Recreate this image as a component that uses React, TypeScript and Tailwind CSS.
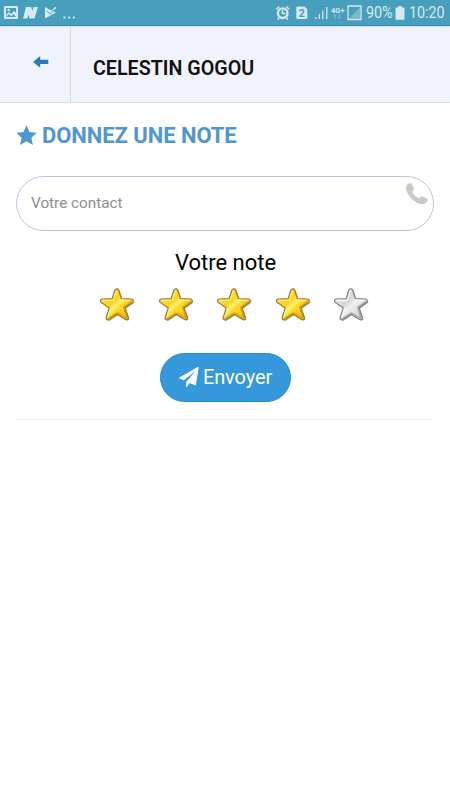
const starPath =
  "M16.4 1.8 C17.4 1.2 18.9 1.4 19.4 2.8 L22.1 11.2 L32.2 11.6 C34.2 11.9 34.5 13.8 33.2 14.9 L25.6 20.4 L29 30.3 C29.3 32 27.6 32.8 26.2 32 L17.9 26.8 L9.6 32.2 C8 33 6.4 32 6.8 30.3 L9.9 20.7 L2 15 C.6 13.8 1 11.9 2.9 11.6 L12.9 11.3 L15.4 3 Z";

function RatingStar({ on }: { on: boolean }) {
  return (
    <svg width="36" height="36" viewBox="-.3 -.4 36 36">
      <defs>
        <linearGradient id="gold" x1="0" y1="0" x2="1" y2="1">
          <stop offset="0.1" stopColor="#ffe45b" />
          <stop offset="0.4" stopColor="#ffd414" />
          <stop offset="0.5" stopColor="#fff07a" />
          <stop offset="0.6" stopColor="#ffd51c" />
          <stop offset="1" stopColor="#f8bc08" />
        </linearGradient>
        <linearGradient id="silver" x1="0" y1="0" x2="1" y2="1">
          <stop offset="0.1" stopColor="#eeeeee" />
          <stop offset="0.4" stopColor="#d6d6d6" />
          <stop offset="0.52" stopColor="#efefef" />
          <stop offset="1" stopColor="#c8c8c8" />
        </linearGradient>
      </defs>
      <path d={starPath} transform="translate(1.1 .9)" fill="#666" opacity="0.6" />
      <path
        d={starPath}
        fill={on ? "url(#gold)" : "url(#silver)"}
        stroke={on ? "#987a34" : "#808080"}
        strokeWidth="1.2"
      />
      <path
        d="M4 13 L14.1 12.7 L16.9 3.6 M21 12.6 L30.5 13 M11.3 21.2 L8.6 29.4"
        fill="none"
        stroke={on ? "#fff3a0" : "#ffffff"}
        strokeWidth="1"
        strokeLinecap="round"
        strokeLinejoin="round"
      />
      <path
        d="M31.8 14.4 L24.3 19.9 L27.7 30.8 L17.9 25.4 L9 31"
        fill="none"
        stroke={on ? "#c58a10" : "#8f8f8f"}
        strokeWidth="1.2"
        strokeLinecap="round"
        strokeLinejoin="round"
        opacity="0.65"
      />
    </svg>
  );
}

function StatusBar() {
  return (
    <div className="flex h-[26px] items-center border-b border-[#258fbd] bg-[#489ebd] pl-1 pr-[6px] text-[#d5e9f0]">
      <svg width="72" height="25" viewBox="4 0 72 25" fill="currentColor">
        <path
          fillRule="evenodd"
          d="M5 6h12q1 0 1 1v11q0 1-1 1H5q-1 0-1-1V7q0-1 1-1zM6 8v7l3-3 2 2 3-3 2 2V8zM6 17h10l-2.5-3-2.3 2.3L9 14z"
        />
        <circle cx="8.7" cy="10" r="1.2" />
        <path d="M26 7h5.2l1.3 4L33.4 7H38l-3.5 11.5h-5L28.4 15 27.3 18.5H23z" />
        <path d="M45 7l4.5 2.6 6.5 3-11 5.9z" />
        <path d="M48 10.5l2.6 2.8 5-6" fill="none" stroke="currentColor" strokeWidth="1.6" />
        <path d="M46.8 10.8l3.5 3.2 3.6-4.3" fill="none" stroke="#489ebd" strokeWidth=".9" />
        <path d="M63.5 16.5h2v2h-2zM68.2 16.5h2v2h-2zM72.8 16.5h2v2h-2z" />
      </svg>
      <svg className="ml-auto" width="88" height="25" viewBox="275 0 88 25" fill="currentColor">
        <circle cx="282.7" cy="13.2" r="4.8" fill="none" stroke="currentColor" strokeWidth="2.4" />
        <path
          d="M276.3 9.3l3-2.8M289.2 9.3l-3-2.8M279 18l-1.5 1.5M286.5 18l1.5 1.5M282.5 10v3.5h2.8"
          fill="none"
          stroke="currentColor"
          strokeWidth="1.5"
        />
        <path d="M297 6.5h7.5l2.8 2.5V18q0 1-1 1h-9q-1 0-1-1V7.5z" />
        <text x="301.8" y="17" fill="#489ebd" fontSize="10.5" fontWeight="700" textAnchor="middle" fontFamily="Roboto, sans-serif">
          2
        </text>
        <path d="M315 17h1.5v2H315zM318.5 14h1.5v5h-1.5zM322 10.5h1.5V19H322zM326 7h1.5v12H326z" opacity="0.85" />
        <text x="331" y="13" fontSize="8" fontWeight="700" fontFamily="Roboto, sans-serif" textLength="13.5" lengthAdjust="spacingAndGlyphs">
          4G+
        </text>
        <path d="M335 14l1.6 2h-1v3h-1.2v-3h-1zM339.3 19l1.6-2h-1v-3h-1.2v3h-1z" opacity="0.4" />
        <path d="M348 6h13v13.5H348z" fill="none" stroke="currentColor" strokeWidth="1.3" />
        <path d="M360.3 7v11.5H349z" opacity="0.35" />
      </svg>
      <span className="ml-[3px] w-[27px] origin-left scale-x-[.9] whitespace-nowrap text-[16px] leading-[26px] tracking-[-.1px]">90%</span>
      <svg className="ml-[2px]" width="10" height="14" viewBox="0 0 10 14" fill="currentColor">
        <path d="M3 0h4v1.5H9q.5 0 .5.5v11q0 .8-.8.8H1.3q-.8 0-.8-.8V2q0-.5.5-.5h2z" />
      </svg>
      <span className="ml-[4px] w-[35px] origin-left scale-x-[.89] whitespace-nowrap text-[16px] leading-[26px]">10:20</span>
    </div>
  );
}

export default function App() {
  return (
    <div className="h-[800px] w-[450px] overflow-hidden bg-white font-['Roboto',sans-serif] text-[#111]">
      <StatusBar />
      <header className="flex h-[77px] border-y border-[#d8dfed] bg-[#f0f3fb]">
        <div className="w-[71px] border-r border-[#d3daea] pl-[33px] pt-[29px]">
          <svg width="16" height="12" viewBox="0 0 16 12" fill="#2b7bbb">
            <path d="M7.2 0v3.8H15.3v4.1H7.2v3.9L0 5.9z" />
          </svg>
        </div>
        <h1 className="pl-[22px] pt-[28px] text-[19.7px] font-semibold leading-7">CELESTIN GOGOU</h1>
      </header>
      <main className="px-4">
        <h2 className="flex items-center gap-[5px] pt-[17px] text-[22px] font-bold leading-8 tracking-[-.06px] text-[#5097d1]">
          <svg width="21" height="20" viewBox="0 0 21 20" className="-mt-[3px]" fill="currentColor">
            <path d="M10.5.2l3 6.7 7.2.8-5.3 5 1.5 7.2-6.4-3.7-6.4 3.7 1.5-7.2-5.3-5 7.2-.8z" />
          </svg>
          DONNEZ UNE NOTE
        </h2>
        <div className="mt-6 flex h-[55px] w-[418px] justify-between rounded-full border border-[#bcc5dc] pl-[14px] pr-[5.5px]">
          <span className="text-[15.3px] leading-[52px] text-[#8e8e8e]">Votre contact</span>
          <svg className="mt-[6px]" width="22" height="22" viewBox="0 0 22 22" fill="#c8c8c8">
            <path d="M1.6 1.2Q4.4-.6 5.8 1l2 4q.5 1.3-.6 2.2L6.3 8.4q1.3 4.2 6.8 7.1l1.5-1.8q.8-.8 2-.3l4.2 2q1.6 1 .3 3.4-1.5 2.4-4.6 2.5-5.4 0-10.5-5.2Q.8 11.3.1 5.3-.1 2.7 1.6 1.2z" />
          </svg>
        </div>
        <p className="mt-4 pl-[1px] text-center text-[22px] leading-8 text-black">Votre note</p>
        <div className="mt-[8px] flex gap-[22.5px] pl-[83px]">
          {[true, true, true, true, false].map((on, i) => (
            <RatingStar key={i} on={on} />
          ))}
        </div>
        <div className="mt-[30px] flex border-b border-[#f4f4f4] pb-[17px] pl-[144px]">
          <button className="flex h-[49px] w-[131px] items-center justify-center gap-1 rounded-full border border-[#278bce] bg-[#3498db] pb-[2px] text-[20px] text-white">
            <svg width="20" height="20" viewBox="0 0 20 20" fill="currentColor">
              <path d="M19.7.3L17 17.6q-.2.9-1.1.6l-5.2-2.1-2.6 3.4q-.7.6-1.1-.3v-3.9L16.6 4 4.9 13.3.4 11.5q-.8-.5 0-1.1L18.7.1q.8-.4 1 .2z" />
            </svg>
            <span className="tracking-[-.1px]">Envoyer</span>
          </button>
        </div>
      </main>
    </div>
  );
}
